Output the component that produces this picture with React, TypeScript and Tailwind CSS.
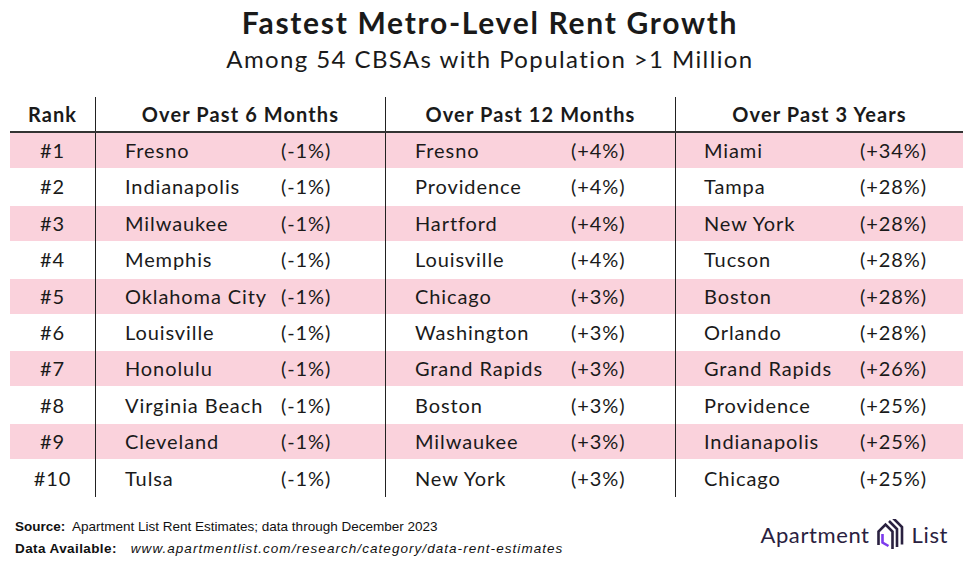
import React from "react";

const rows = [
  ["#1", "Fresno", "(-1%)", "Fresno", "(+4%)", "Miami", "(+34%)"],
  ["#2", "Indianapolis", "(-1%)", "Providence", "(+4%)", "Tampa", "(+28%)"],
  ["#3", "Milwaukee", "(-1%)", "Hartford", "(+4%)", "New York", "(+28%)"],
  ["#4", "Memphis", "(-1%)", "Louisville", "(+4%)", "Tucson", "(+28%)"],
  ["#5", "Oklahoma City", "(-1%)", "Chicago", "(+3%)", "Boston", "(+28%)"],
  ["#6", "Louisville", "(-1%)", "Washington", "(+3%)", "Orlando", "(+28%)"],
  ["#7", "Honolulu", "(-1%)", "Grand Rapids", "(+3%)", "Grand Rapids", "(+26%)"],
  ["#8", "Virginia Beach", "(-1%)", "Boston", "(+3%)", "Providence", "(+25%)"],
  ["#9", "Cleveland", "(-1%)", "Milwaukee", "(+3%)", "Indianapolis", "(+25%)"],
  ["#10", "Tulsa", "(-1%)", "New York", "(+3%)", "Chicago", "(+25%)"],
];

function Logo() {
  return (
    <div className="flex items-center gap-[6px] text-[#2a2140] mb-[6px]">
      <span className="text-[22px] font-['Lato',sans-serif] tracking-[0.6px]">Apartment</span>
      <svg width="30" height="31" viewBox="0 0 30 31" fill="none" strokeLinecap="butt" strokeLinejoin="miter">
        <path d="M2.5 26 V12.5 L9.5 5.5 L16.5 12.5 V30" stroke="#2a2140" strokeWidth="2.6" />
        <path d="M13 2 L21 10 V28" stroke="#2a2140" strokeWidth="2.6" />
        <path d="M17 -1 L26 8 V25.5" stroke="#2a2140" strokeWidth="2.6" />
        <path d="M6.5 15 V23.5 L12.5 27" stroke="#7c3aed" strokeWidth="2.6" />
      </svg>
      <span className="text-[22px] font-['Lato',sans-serif] tracking-[0.6px]">List</span>
    </div>
  );
}

export default function App() {
  return (
    <div className="w-[980px] h-[562px] bg-white text-[#1a1a1a] font-['Lato',sans-serif] overflow-hidden">
      <div className="pt-[4px] text-center">
        <div className="text-[30px] font-bold leading-[36px] tracking-[1.7px]">Fastest Metro-Level Rent Growth</div>
        <div className="text-[24px] leading-[36px] mt-[1px] tracking-[1.4px]">Among 54 CBSAs with Population &gt;1 Million</div>
      </div>
      <div className="ml-[10px] w-[953px] mt-[20px]">
        <div className="flex h-[36px] border-b-2 border-[#333] text-[20px] font-bold tracking-[1.1px]">
          <div className="w-[85px] flex items-center justify-center">Rank</div>
          <div className="w-[290px] flex items-center justify-center border-l-[1.5px] border-[#222]">Over Past 6 Months</div>
          <div className="w-[290px] flex items-center justify-center border-l-[1.5px] border-[#222]">Over Past 12 Months</div>
          <div className="w-[288px] flex items-center justify-center border-l-[1.5px] border-[#222]">Over Past 3 Years</div>
        </div>
        {rows.map((r, i) => {
          const pink = i % 2 === 0;
          return (
            <div key={i} className={`flex text-[20px] tracking-[0.9px] leading-[24px] ${pink ? "h-[35px] bg-[#fad2dc]" : "h-[37.8px] bg-white"}`}>
              <div className="w-[85px] flex items-center justify-center pb-[1px]">{r[0]}</div>
              <div className="w-[290px] flex items-center border-l-[1.5px] border-[#222] pl-[29px] pb-[1px]">
                <span className="w-[156px]">{r[1]}</span>
                <span>{r[2]}</span>
              </div>
              <div className="w-[290px] flex items-center border-l-[1.5px] border-[#222] pl-[29px] pb-[1px]">
                <span className="w-[156px]">{r[3]}</span>
                <span>{r[4]}</span>
              </div>
              <div className="w-[288px] flex items-center border-l-[1.5px] border-[#222] pl-[28px] pb-[1px]">
                <span className="w-[156px]">{r[5]}</span>
                <span>{r[6]}</span>
              </div>
            </div>
          );
        })}
      </div>
      <div className="flex items-center justify-between pl-[15px] pr-[32px] mt-[19px]">
        <div className="font-['Liberation_Sans',Arial,sans-serif] text-[13.5px] leading-[22px] text-[#111]">
          <div>
            <span className="font-bold">Source:</span>&nbsp; Apartment List Rent Estimates; data through December 2023
          </div>
          <div className="flex">
            <span className="font-bold tracking-[0.4px]">Data Available:</span>
            <span className="italic tracking-[1.05px] ml-[14px]">www.apartmentlist.com/research/category/data-rent-estimates</span>
          </div>
        </div>
        <Logo />
      </div>
    </div>
  );
}
